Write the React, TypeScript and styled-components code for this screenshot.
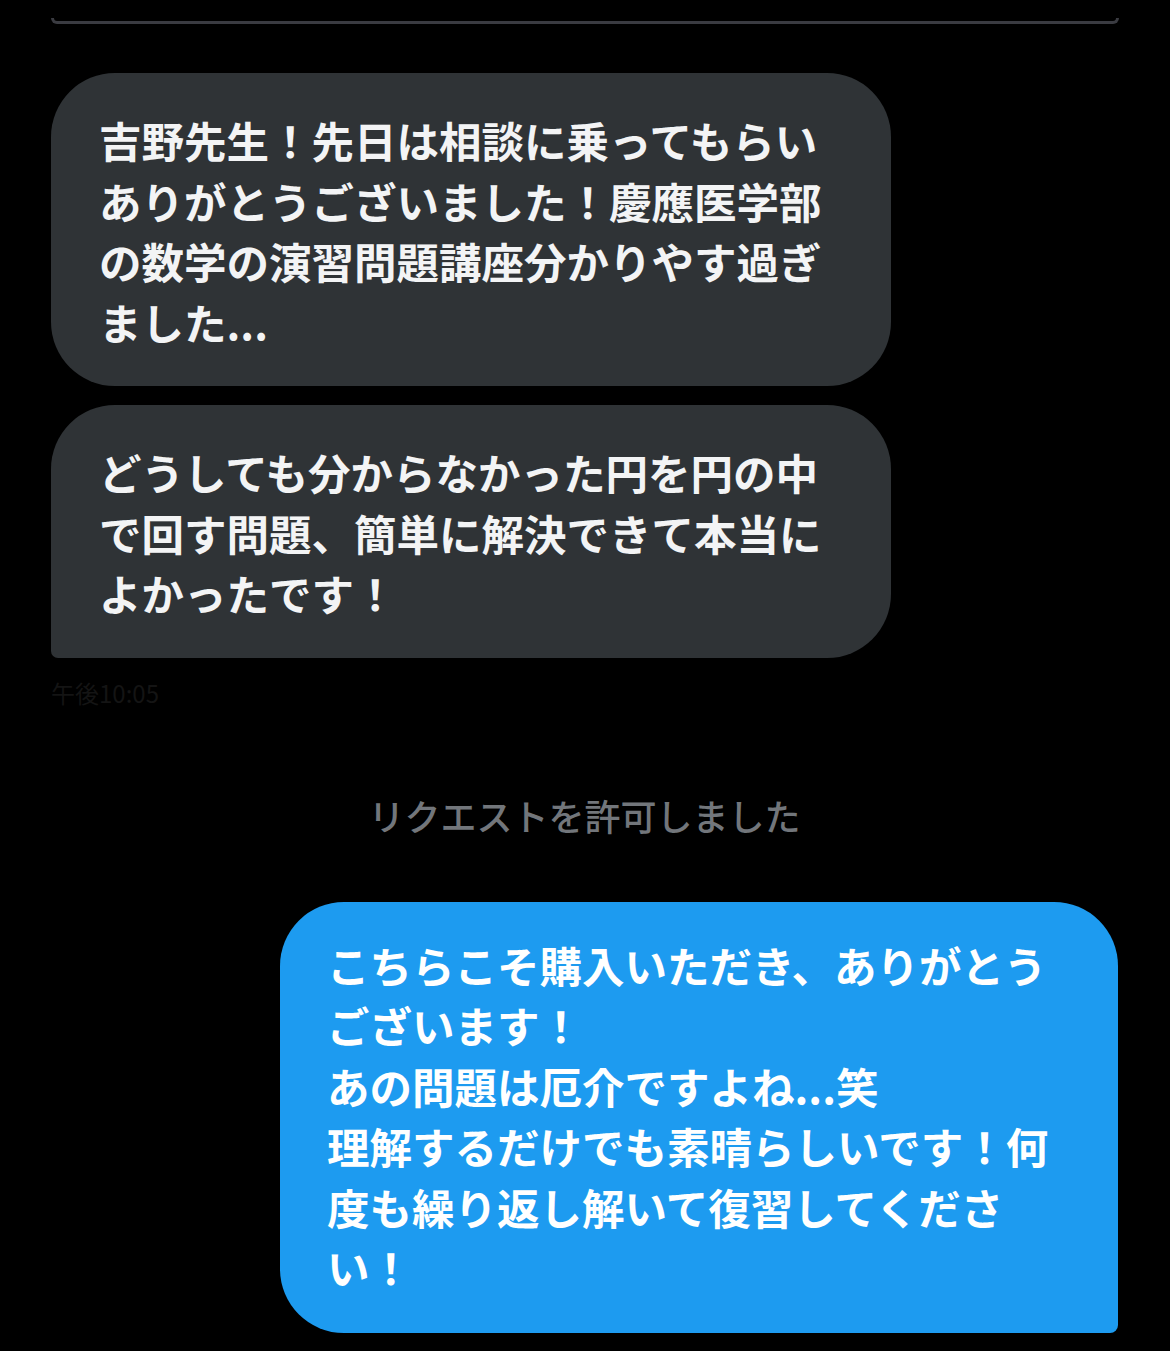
import React from "react";
import styled, { createGlobalStyle } from "styled-components";

const Global = createGlobalStyle`
  html, body { margin: 0; padding: 0; background: #000; }
  body { font-family: "Noto Sans CJK JP", "Noto Sans", sans-serif; }
`;

const Page = styled.div`
  width: 1170px;
  height: 1351px;
  background: #000;
  overflow: hidden;
  display: flex;
  flex-direction: column;
`;

const TopEdge = styled.div`
  margin: 18px 51px 0;
  height: 3px;
  border: 3px solid #3a3b41;
  border-top: none;
  border-radius: 0 0 7px 7px;
  box-sizing: content-box;
`;

const Thread = styled.div`
  display: flex;
  flex-direction: column;
  padding: 49px 52px 0 51px;
`;

const Bubble = styled.div<{ $mine?: boolean; $tail?: boolean }>`
  box-sizing: border-box;
  width: ${(p) => (p.$mine ? "838px" : "840px")};
  align-self: ${(p) => (p.$mine ? "flex-end" : "flex-start")};
  background: ${(p) => (p.$mine ? "#1d9bf0" : "#2f3336")};
  color: ${(p) => (p.$mine ? "#ffffff" : "#f3f4f5")};
  border-radius: ${(p) =>
    p.$mine
      ? "64px 64px 8px 64px"
      : p.$tail
      ? "64px 64px 64px 7px"
      : "64px 64px 64px 64px"};
  padding: ${(p) => (p.$mine ? "33px 30px 35px 47px" : "37px 30px 34px 48px")};
  font-size: 42.5px;
  line-height: 60.5px;
  font-weight: 700;
  letter-spacing: 0;
  white-space: nowrap;
`;

const Gap = styled.div<{ $h: number }>`
  height: ${(p) => p.$h}px;
  flex: none;
`;

const Stamp = styled.div`
  margin-top: 20px;
  font-size: 24px;
  line-height: 30px;
  color: #141414;
`;

const SystemNote = styled.div`
  text-align: center;
  margin-top: 82px;
  font-size: 36px;
  line-height: 50px;
  color: #72767b;
  font-weight: 500;
`;

const Line = styled.span`
  display: block;
`;

const gray1 = [
  "吉野先生！先日は相談に乗ってもらい",
  "ありがとうございました！慶應医学部",
  "の数学の演習問題講座分かりやす過ぎ",
  "ました...",
];
const gray2 = [
  "どうしても分からなかった円を円の中",
  "で回す問題、簡単に解決できて本当に",
  "よかったです！",
];
const blue = [
  "こちらこそ購入いただき、ありがとう",
  "ございます！",
  "あの問題は厄介ですよね...笑",
  "理解するだけでも素晴らしいです！何",
  "度も繰り返し解いて復習してくださ",
  "い！",
];

export default function App() {
  return (
    <Page>
      <Global />
      <TopEdge />
      <Thread>
        <Bubble>
          {gray1.map((l, i) => (
            <Line key={i}>{l}</Line>
          ))}
        </Bubble>
        <Gap $h={19} />
        <Bubble $tail>
          {gray2.map((l, i) => (
            <Line key={i}>{l}</Line>
          ))}
        </Bubble>
        <Stamp>午後10:05</Stamp>
        <SystemNote>リクエストを許可しました</SystemNote>
        <Gap $h={62} />
        <Bubble $mine>
          {blue.map((l, i) => (
            <Line key={i}>{l}</Line>
          ))}
        </Bubble>
      </Thread>
    </Page>
  );
}
